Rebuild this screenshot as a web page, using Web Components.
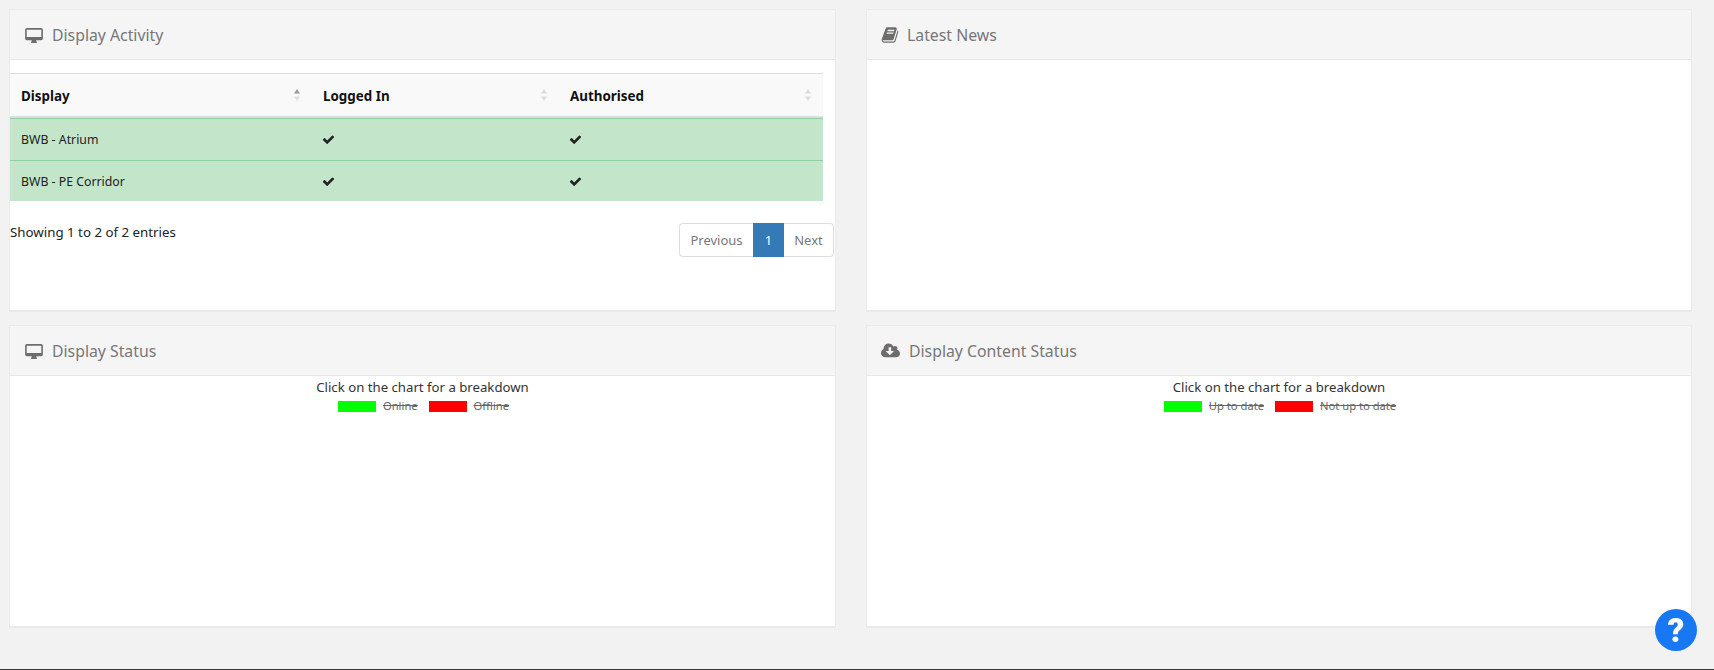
<!DOCTYPE html>
<html>
<head>
<meta charset="utf-8">
<title>Dashboard</title>
<style>
  html, body { height: 100%; }
  body {
    margin: 0;
    background: #f2f2f2;
    color: #222;
    font-family: "Noto Sans", "Open Sans", sans-serif;
    overflow: hidden;
  }
</style>
</head>
<body>
<dash-page>
  <dash-panel heading="Display Activity" icon="desktop">
    <display-table></display-table>
  </dash-panel>
  <dash-panel heading="Latest News" icon="book"></dash-panel>
  <dash-panel heading="Display Status" icon="desktop">
    <chart-box title-text="Click on the chart for a breakdown" good="Online" bad="Offline"></chart-box>
  </dash-panel>
  <dash-panel heading="Display Content Status" icon="cloud">
    <chart-box title-text="Click on the chart for a breakdown" good="Up to date" bad="Not up to date"></chart-box>
  </dash-panel>
</dash-page>
<help-button></help-button>

<script>
  const ICONS = {
    desktop: '<svg width="18" height="16" viewBox="0 0 20 18"><path fill="currentColor" fill-rule="evenodd" d="M2 1h16a2 2 0 0 1 2 2v10a2 2 0 0 1-2 2h-5.5c0 1 .8 2 .8 2.4 0 .4-.3.6-.6.6H7.300c-.3 0-.6-.2-.6-.6 0-.4.8-1.400.8-2.400H2a2 2 0 0 1-2-2V3a2 2 0 0 1 2-2zm-.2 2v8.200h16.400V3z"/></svg>',
    book: '<svg width="18" height="18" viewBox="0 0 1792 1792"><path fill="currentColor" d="M1703 478q40 57 18 129l-275 906q-19 64-76.500 107.500t-122.500 43.500h-923q-77 0-148.500-53.500t-99.500-131.500q-24-67-2-127 0-4 3-27t4-37q1-8-3-21.500t-3-19.500q2-11 8-21t16.500-23.500 16.500-23.500q23-38 45-91.500t30-91.500q3-10 .5-30t-.5-28q3-11 17-28t17-23q21-36 42-92t25-90q1-9-2.500-32t.5-28q4-13 22-30.500t22-22.500q19-26 42.500-84.500t27.500-96.500q1-8-3-25.500t-2-26.500q2-8 9-18t18-23 17-21q8-12 16.500-30.500t15-35 16-36 19.500-32 26.500-23.500 36-11.500 47.500 5.500l-1 3q38-9 51-9h761q74 0 114 56t18 130l-274 906q-36 119-71.500 153.500t-128.500 34.500h-869q-27 0-38 15-11 16-1 43 24 70 144 70h923q29 0 56-15.500t35-41.500l300-987q7-22 5-57 38 15 59 43zm-1064 2q-4 13 2 22.500t20 9.500h608q13 0 25.500-9.500t16.500-22.500l21-64q4-13-2-22.500t-20-9.500h-608q-13 0-25.500 9.500t-16.500 22.500zm-83 256q-4 13 2 22.500t20 9.500h608q13 0 25.500-9.500t16.500-22.500l21-64q4-13-2-22.500t-20-9.500h-608q-13 0-25.500 9.500t-16.500 22.500z"/></svg>',
    cloud: '<svg width="19" height="18" viewBox="0 0 1920 1792"><path fill="currentColor" d="M1280 928q0-14-9-23t-23-9h-224v-352q0-13-9.500-22.500t-22.500-9.500h-192q-13 0-22.500 9.500t-9.500 22.500v352h-224q-13 0-22.500 9.500t-9.500 22.500q0 14 9 23l352 352q9 9 23 9t23-9l351-351q10-12 10-24zm640 224q0 159-112.500 271.500t-271.500 112.500h-1088q-185 0-316.500-131.500t-131.500-316.500q0-130 70-240t188-165q-2-30-2-43 0-212 150-362t362-150q156 0 285.500 87t188.500 231q71-62 166-62 106 0 181 75t75 181q0 76-41 138 130 31 213.500 135.500t83.500 238.500z"/></svg>'
  };
  const CHECK = '<svg width="13" height="13" viewBox="0 0 1792 1792"><path fill="#222" d="M1671 566q0 40-28 68l-724 724-136 136q-28 28-68 28t-68-28l-136-136-362-362q-28-28-28-68t28-68l136-136q28-28 68-28t68 28l294 295 656-657q28-28 68-28t68 28l136 136q28 28 28 68z"/></svg>';

  class DashPage extends HTMLElement {
    constructor() {
      super();
      this.attachShadow({ mode: 'open' });
      this.shadowRoot.innerHTML = `
        <style>
          :host {
            display: grid;
            grid-template-columns: 827px 826px;
            grid-auto-rows: 303px;
            column-gap: 30px;
            row-gap: 13px;
            padding: 9px 0 0 9px;
            height: 660px;
            border-bottom: 1px solid #333;
          }
        </style>
        <slot></slot>
      `;
    }
  }

  class DashPanel extends HTMLElement {
    constructor() {
      super();
      this.attachShadow({ mode: 'open' });
    }

    connectedCallback() {
      const icon = this.getAttribute('icon');
      this.shadowRoot.innerHTML = `
        <style>
          :host {
            display: flex;
            flex-direction: column;
            background: #fff;
            border: 1px solid #eaeaea;
            border-bottom-width: 2px;
            box-sizing: border-box;
            min-width: 0;
          }
          header {
            display: flex;
            align-items: center;
            gap: 9px;
            height: 49px;
            flex: none;
            padding: 0 0 0 14px;
            background: #f5f5f5;
            border-bottom: 1px solid #e7e7e7;
            color: #777;
            font-size: 15.800px;
          }
          .icon { display: flex; align-items: center; color: #6f6d6b; }
          .desktop { margin-left: 1px; }
          .book { margin-right: -1px; }
          .body { flex: 1; min-height: 0; }
        </style>
        <header>
          <span class="icon ${icon}">${ICONS[icon]}</span>
          <span>${this.getAttribute('heading')}</span>
        </header>
        <div class="body"><slot></slot></div>
      `;
    }
  }

  class DisplayTable extends HTMLElement {
    constructor() {
      super();
      this.attachShadow({ mode: 'open' });
      const sort = (active) => `
        <svg class="sort" width="8" height="14" viewBox="0 0 8 14">
          <path fill="${active ? '#999' : '#ddd'}" d="M4 1l3 4.500H1z"/>
          <path fill="#ddd" d="M4 13l3-4.500H1z"/>
        </svg>`;
      const row = (name) => `
        <tr><td>${name}</td><td>${CHECK}</td><td>${CHECK}</td></tr>`;
      this.shadowRoot.innerHTML = `
        <style>
          :host { display: block; padding-top: 13px; font-size: 12.300px; }
          table {
            width: 813px;
            border-collapse: separate;
            border-spacing: 0;
            table-layout: fixed;
            border-top: 1px solid #ddd;
          }
          th {
            position: relative;
            height: 40px;
            padding: 2px 10px 0 11px;
            background: #f9f9f9;
            border-bottom: 2px solid #ddd;
            text-align: left;
            font-weight: 700;
            font-size: 13.400px;
            color: #111;
          }
          .sort { position: absolute; right: 11px; top: 14px; }
          td {
            padding: 0 10px 0 11px;
            height: 41px;
            background: #c3e6cb;
            border-top: 1px solid #8fd19e;
            color: #222;
          }
          tr + tr td { height: 40px; }
          td svg { display: block; margin-left: -1px; }
          .foot {
            display: flex;
            justify-content: space-between;
            align-items: flex-start;
            padding: 22px 1px 0 0;
            font-size: 13.300px;
          }
        </style>
        <table>
          <colgroup><col style="width:302px"><col style="width:247px"><col style="width:264px"></colgroup>
          <thead>
            <tr><th>Display${sort(true)}</th><th>Logged In${sort()}</th><th>Authorised${sort()}</th></tr>
          </thead>
          <tbody>${row('BWB - Atrium')}${row('BWB - PE Corridor')}</tbody>
        </table>
        <div class="foot">
          <span>Showing 1 to 2 of 2 entries</span>
          <page-nav></page-nav>
        </div>
      `;
    }
  }

  class PageNav extends HTMLElement {
    constructor() {
      super();
      this.attachShadow({ mode: 'open' });
      this.shadowRoot.innerHTML = `
        <style>
          :host {
            display: flex;
            height: 34px;
            font-size: 13px;
            color: #777;
          }
          a {
            display: flex;
            align-items: center;
            justify-content: center;
            box-sizing: border-box;
            border: 1px solid #ddd;
          }
          .prev { width: 74px; border-right: 0; border-radius: 4px 0 0 4px; }
          .cur { width: 31px; background: #337ab7; border-color: #337ab7; color: #fff; }
          .next { width: 50px; border-left: 0; border-radius: 0 4px 4px 0; }
        </style>
        <a class="prev">Previous</a><a class="cur">1</a><a class="next">Next</a>
      `;
    }
  }

  class ChartBox extends HTMLElement {
    constructor() {
      super();
      this.attachShadow({ mode: 'open' });
    }

    connectedCallback() {
      this.shadowRoot.innerHTML = `
        <style>
          :host { display: block; text-align: center; padding-top: 2px; color: #333; font-size: 13.200px; }
          .title { line-height: 19px; }
          .legend {
            display: flex;
            justify-content: center;
            align-items: center;
            gap: 7px;
            height: 15px;
            margin: 2px 0 0 6px;
            font-size: 11.200px;
            color: #666;
          }
          i { display: block; width: 38px; height: 11px; }
          s { margin-right: 4px; position: relative; top: -1px; }
        </style>
        <div class="title">${this.getAttribute('title-text')}</div>
        <div class="legend">
          <i style="background:#00ff00"></i><s>${this.getAttribute('good')}</s>
          <i style="background:#ff0000"></i><s>${this.getAttribute('bad')}</s>
        </div>
      `;
    }
  }

  class HelpButton extends HTMLElement {
    constructor() {
      super();
      this.attachShadow({ mode: 'open' });
      this.shadowRoot.innerHTML = `
        <style>
          :host {
            position: fixed;
            left: 1655px;
            top: 609px;
            width: 42px;
            height: 42px;
            border-radius: 50%;
            background: #1877f2;
            color: #fff;
            display: flex;
            align-items: center;
            justify-content: center;
            font: 900 33px Roboto, "Liberation Sans", sans-serif;
          }
        </style>
        <span>?</span>
      `;
    }
  }

  customElements.define('dash-page', DashPage);
  customElements.define('dash-panel', DashPanel);
  customElements.define('display-table', DisplayTable);
  customElements.define('page-nav', PageNav);
  customElements.define('chart-box', ChartBox);
  customElements.define('help-button', HelpButton);
</script>
</body>
</html>
